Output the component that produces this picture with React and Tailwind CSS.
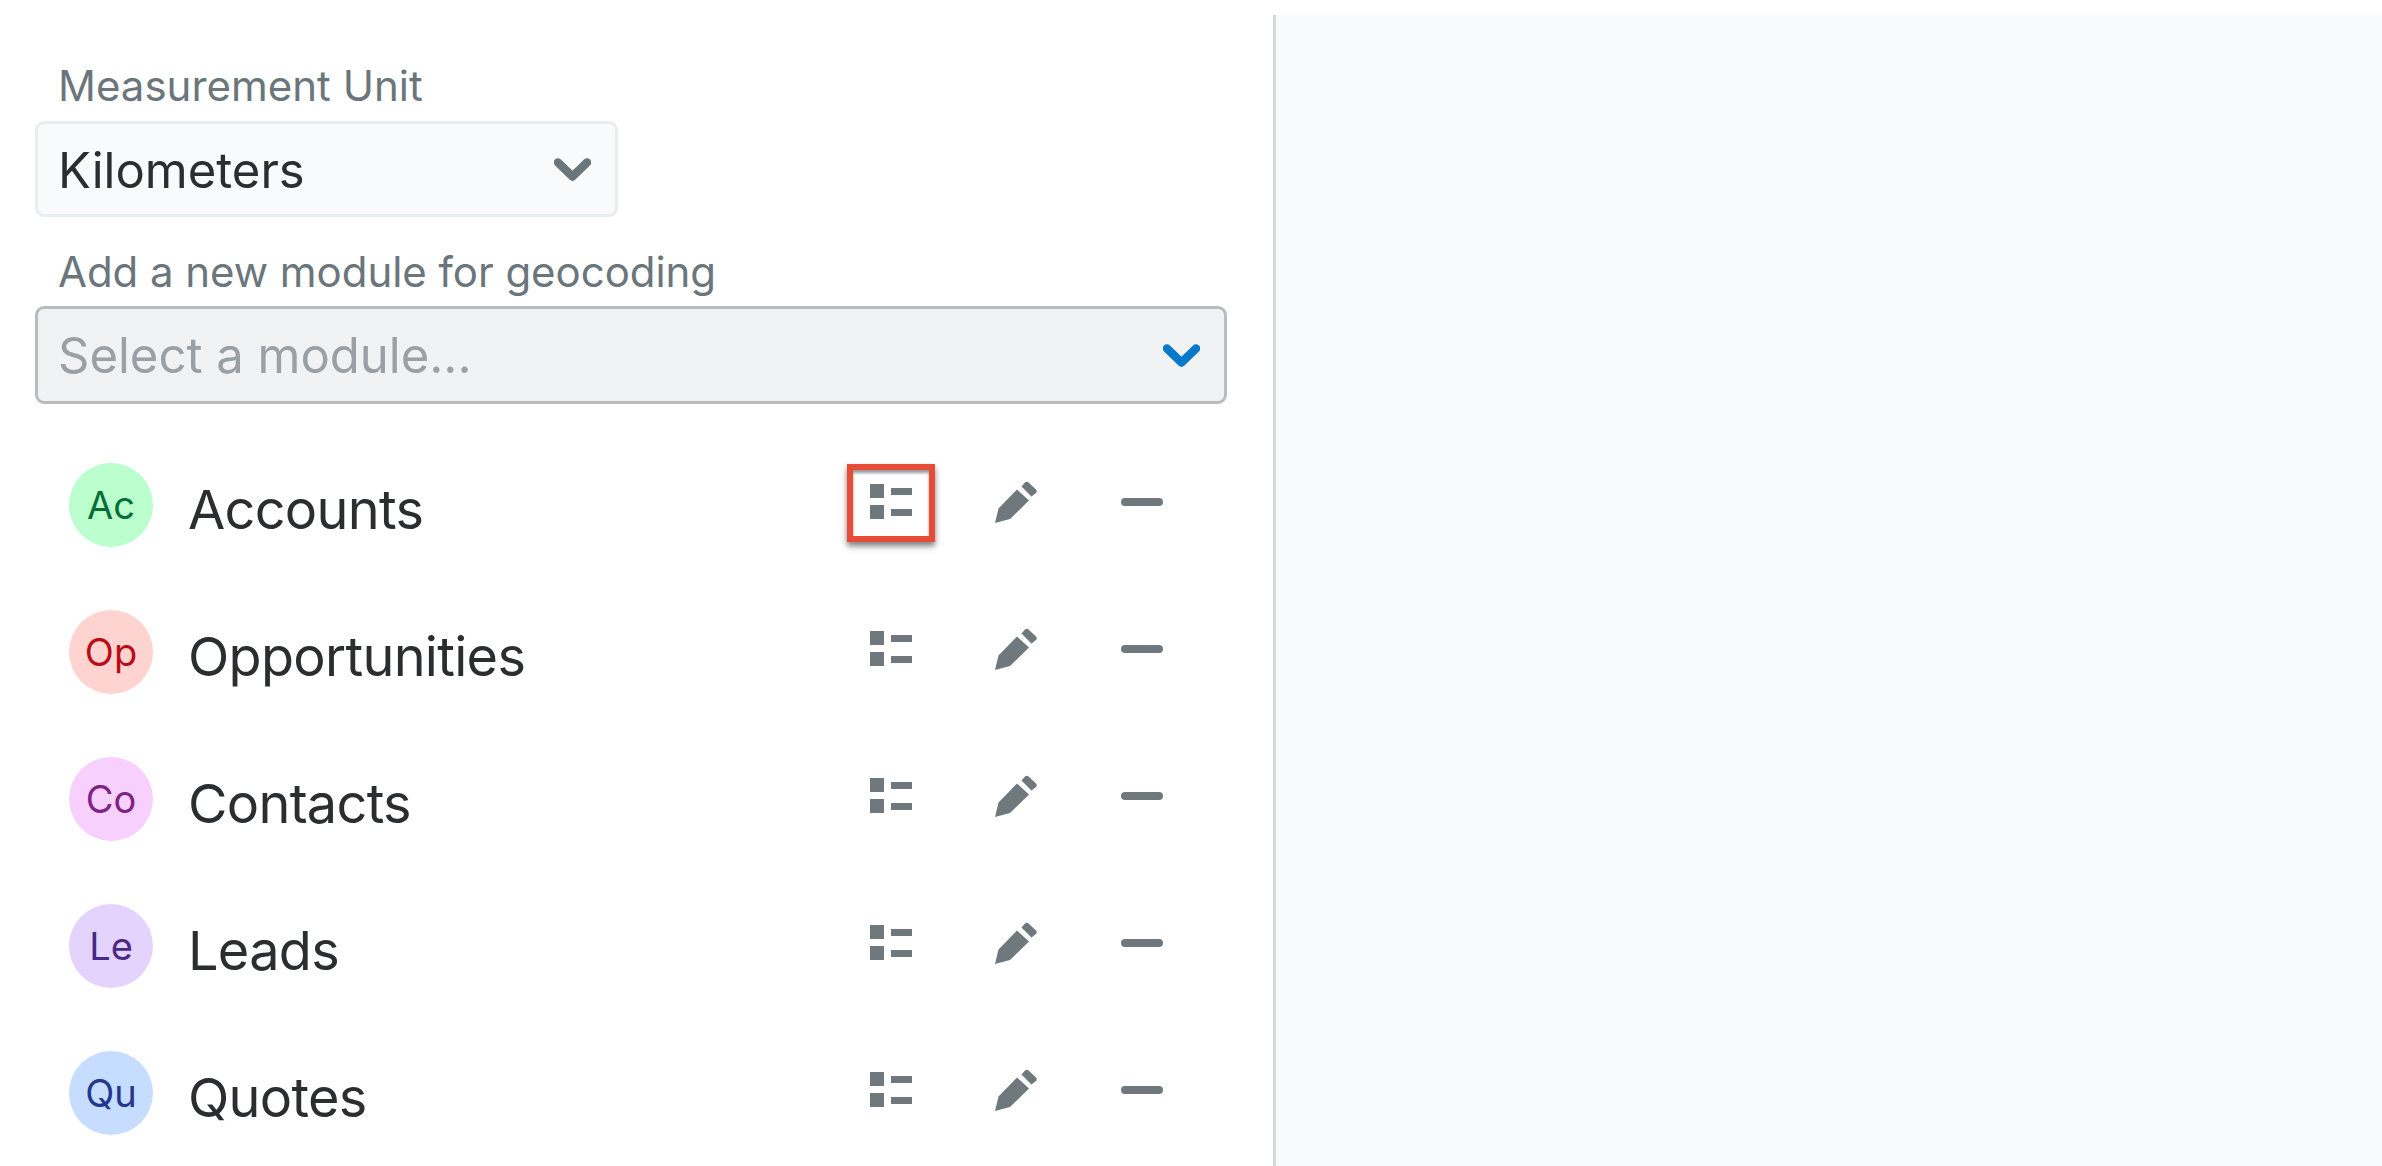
import React from "react";

const modules = [
  { short: "Ac", name: "Accounts", circle: "bg-[#baffcd]", text: "text-[#056f37]", active: true },
  { short: "Op", name: "Opportunities", circle: "bg-[#ffd4d0]", text: "text-[#bb0d18]" },
  { short: "Co", name: "Contacts", circle: "bg-[#f7d0fd]", text: "text-[#7d2483]" },
  { short: "Le", name: "Leads", circle: "bg-[#e4d3fc]", text: "text-[#472a85]" },
  { short: "Qu", name: "Quotes", circle: "bg-[#c6ddff]", text: "text-[#25368f]" },
];

function Chevron({ className }) {
  return (
    <svg width="37" height="23" viewBox="0 0 37 23" fill="none" className={className}>
      <path d="M4 4.5L18.5 18.5L33 4.5" stroke="currentColor" strokeWidth="8.5" strokeLinecap="round" strokeLinejoin="round" />
    </svg>
  );
}

function ListIcon() {
  return (
    <svg width="42" height="35" viewBox="0 0 42 35" fill="#6f787d" className="block">
      <rect x="0" y="0" width="14" height="14" />
      <rect x="21" y="4" width="21" height="7" />
      <rect x="0" y="21" width="14" height="14" />
      <rect x="21" y="25" width="21" height="7" />
    </svg>
  );
}

function PencilIcon() {
  return (
    <svg width="42" height="42" viewBox="0 0 42 42" fill="#6f787d" className="block">
      <path d="M26.5 5.5L30 1.5C31 .5 32.5 .5 33.5 1.5L41 8.5C42 9.5 42 11 41 12L36.5 15.5Z" />
      <path d="M22 8.5L34 19.5L15 38L0 42L3.5 27.5Z" />
    </svg>
  );
}

function ModuleRow({ item }) {
  return (
    <div className="flex items-center h-[147px]">
      <div className={`w-[84px] h-[84px] ml-[34px] pt-[2px] rounded-full flex items-center justify-center text-[38px] ${item.circle} ${item.text}`}>
        {item.short}
      </div>
      <div className="ml-[35px] w-[659px] pt-[10px] text-[54px] leading-none tracking-[-0.7px] text-[#2b2d2e]">{item.name}</div>
      <div className={`w-[88px] h-[78px] mb-[3px] pb-[3px] flex items-center justify-center ${item.active ? "border-[6px] border-[#e64c36] shadow-[0_4px_6px_rgba(0,0,0,0.5),inset_0_3px_3px_rgba(0,0,0,0.4)]" : ""}`}>
        <ListIcon />
      </div>
      <div className="ml-[60px] mb-[5px]">
        <PencilIcon />
      </div>
      <div className="ml-[84px] mb-[5px] w-[42px] h-[8px] rounded-full bg-[#6f787d]"></div>
    </div>
  );
}

export default function App() {
  return (
    <div className="w-[2382px] h-[1166px] overflow-hidden bg-white flex pt-[15px] font-['Inter',sans-serif]">
      <div className="w-[1273px] shrink-0 pl-[35px] pr-[46px] overflow-hidden">
        <div className="pl-[23px] pt-[46px] text-[42px] leading-[50px] text-[#6b767c]">Measurement Unit</div>
        <div className="mt-[10px] w-[583px] h-[96px] pl-[20px] pr-[24px] flex items-center justify-between rounded-[9px] border-[3px] border-[#e9edef] bg-[#f9fafb]">
          <span className="text-[49px] leading-none pt-[2px] text-[#2b2d2e]">Kilometers</span>
          <Chevron className="text-[#6b767c]" />
        </div>
        <div className="pl-[23px] mt-[30px] text-[42px] leading-[50px] tracking-[-0.05px] text-[#6b767c]">Add a new module for geocoding</div>
        <div className="mt-[9px] w-[1192px] h-[98px] pl-[20px] pr-[24px] flex items-center justify-between rounded-[9px] border-[3px] border-[#b9bdbf] bg-[#f1f2f4]">
          <span className="text-[49px] leading-none text-[#9aa0a4]">Select a module...</span>
          <Chevron className="text-[#0679c9]" />
        </div>
        <div className="mt-[27px] w-[1192px]">
          {modules.map((item) => (
            <ModuleRow key={item.name} item={item} />
          ))}
        </div>
      </div>
      <div className="w-[3px] shrink-0 bg-[#d6d7d8]"></div>
      <div className="flex-1 bg-[#f9fafb]"></div>
    </div>
  );
}
